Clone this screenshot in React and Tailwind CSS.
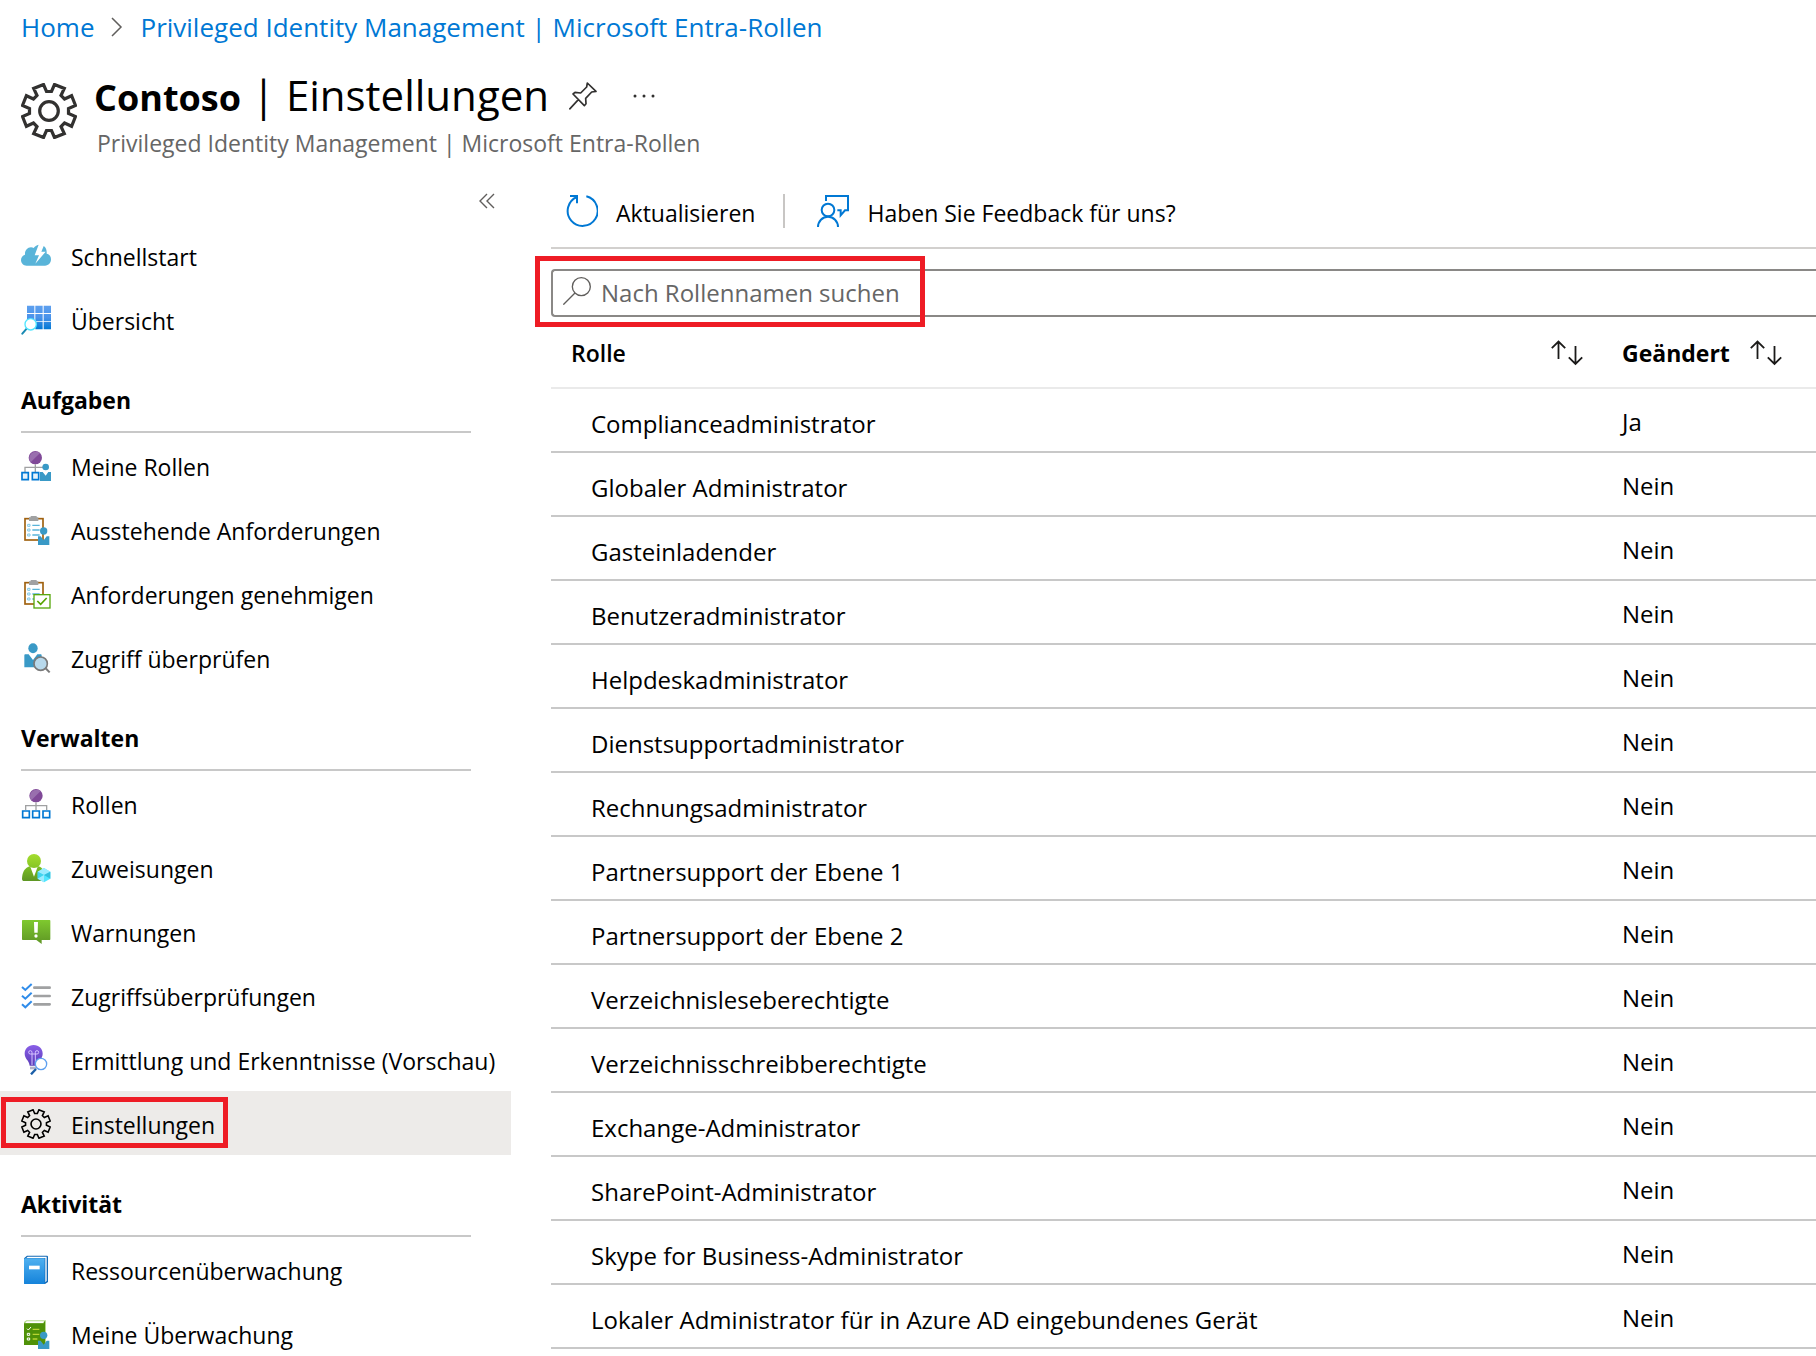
import React, {Component} from 'react'

// menu icons share a 90 x 90 drawing area
const Icon = ({ children }) => (
    <svg viewBox="0 0 90 90" className="h-[30px] w-[30px] shrink-0" fill="none" aria-hidden="true">{children}</svg>
)

const Person = ({ x, y }) => (
    <g transform={`translate(${x} ${y})`} fill="#3999c6">
        <circle cx="17" cy="11" r="11" />
        <path d="M0 27h8l9 12 9-12h8v26H0z" />
    </g>
)

const Clipboard = () => (
    <g>
        <rect x="12" y="11" width="54" height="64" fill="#fff" stroke="#a0610f" strokeWidth="5" />
        <path d="M29 3h18v4h5v11H24V7h5z" fill="#a0a1a2" />
        <path d="M34 31h22M34 45h22M34 60h22" stroke="#59b4d9" strokeWidth="4" />
        <path d="M20 28h7v6h-7zM20 42h7v6h-7zM20 57h7v6h-7z" stroke="#7fc8e6" strokeWidth="3" />
    </g>
)

const Gear = ({ className, strokeWidth }) => (
    <svg viewBox="-28 -28 56 56" className={className} fill="none" stroke="currentColor" strokeWidth={strokeWidth} aria-hidden="true">
        <path d="M-2.5-19.5 2.5-19.5 5.5-26.5 15.3-22.6 12-15.5 15.5-12 22.6-15.3 26.5-5.5 19.5-2.5 19.5 2.5 26.5 5.5 22.6 15.3 15.5 12 12 15.5 15.3 22.6 5.5 26.5 2.5 19.5-2.5 19.5-5.5 26.5-15.3 22.6-12 15.5-15.5 12-22.6 15.3-26.5 5.5-19.5 2.5-19.5-2.5-26.5-5.5-22.6-15.3-15.5-12-12-15.5-15.3-22.6-5.5-26.5z" />
        <circle r="9.3" />
    </svg>
)

const icons = {
    cloud: (
        <Icon>
            <path d="M17 74C7 74 0 66 0 57c0-8 5-14 12-16-1-12 7-22 18-22 3 0 6 1 8 2 4-6 10-10 18-10 12 0 21 9 21 22v5c8 2 13 8 13 17 0 11-7 19-18 19z" fill="#59b4d9" />
            <path d="M54 8 41 43h13L43 68l31-36H61l10-24z" fill="#fff" />
        </Icon>
    ),
    grid: (
        <Icon>
            <defs>
                <linearGradient id="gridFill" x1="0" y1="2" x2="0" y2="73" gradientUnits="userSpaceOnUse">
                    <stop stopColor="#5ea0ef" />
                    <stop offset=".5" stopColor="#4a93ea" />
                    <stop offset="1" stopColor="#0078d4" />
                </linearGradient>
            </defs>
            <path d="M18 2h22v22H18zM43 2h22v22H43zM68 2h22v22H68zM18 27h22v22H18zM43 27h22v22H43zM68 27h22v22H68zM43 51h22v22H43zM68 51h22v22H68z" fill="url(#gridFill)" />
            <path d="M17 71 4 86" stroke="#198ab3" strokeWidth="6" strokeLinecap="round" />
            <circle cx="29" cy="58" r="17" fill="#fff" stroke="#50e6ff" strokeWidth="4" />
        </Icon>
    ),
    myRoles: (
        <Icon>
            <circle cx="43" cy="20" r="20" fill="#804998" />
            <path d="M29 34A20 20 0 0 1 57 6z" fill="#996fae" />
            <path d="M43 40v23M12 63V49h61" stroke="#a0a1a2" strokeWidth="4" />
            <path d="M3 65h19v21H3zM34 65h19v21H34z" fill="#e5f2fb" stroke="#0078d4" strokeWidth="5" />
            <circle cx="74" cy="48" r="10" fill="#3999c6" />
            <path d="M57 63h8l9 11 8-11h8v27H57z" fill="#3999c6" />
        </Icon>
    ),
    pending: (
        <Icon>
            <Clipboard />
            <Person x={51} y={37} />
        </Icon>
    ),
    approve: (
        <Icon>
            <Clipboard />
            <rect x="39" y="47" width="48" height="40" fill="#fff" stroke="#59a80e" strokeWidth="4" />
            <path d="M49 66 59 76 77 57" stroke="#57a300" strokeWidth="5" />
        </Icon>
    ),
    review: (
        <Icon>
            <ellipse cx="36" cy="16" rx="14" ry="15" fill="#3999c6" />
            <path d="M10 38c0-3 1-4 4-4h9l13 17 13-17h9c3 0 4 1 4 4v35H10z" fill="#3999c6" />
            <circle cx="59" cy="62" r="20" fill="#b8d9ec" stroke="#7a7a7a" strokeWidth="5" />
            <path d="M73 75 86 88" stroke="#7a7a7a" strokeWidth="6" />
        </Icon>
    ),
    roles: (
        <Icon>
            <circle cx="45" cy="20" r="20" fill="#804998" />
            <path d="M31 34A20 20 0 0 1 59 6z" fill="#996fae" />
            <path d="M45 40v23M14 63V50h63v13" stroke="#a0a1a2" strokeWidth="4" />
            <path d="M5 66h20v20H5zM35 66h20v20H35zM66 66h20v20H66z" fill="#fff" stroke="#0078d4" strokeWidth="5" />
        </Icon>
    ),
    assign: (
        <Icon>
            <defs>
                <linearGradient id="assignHead" x1="0" y1="0" x2="0" y2="1">
                    <stop stopColor="#a4dd2f" />
                    <stop offset="1" stopColor="#86c525" />
                </linearGradient>
                <linearGradient id="assignBody" x1="0" y1="0" x2="0" y2="1">
                    <stop stopColor="#7cbf22" />
                    <stop offset="1" stopColor="#5e9624" />
                </linearGradient>
            </defs>
            <path d="M26 40h26c14 4 20 15 22 44H10c-5 0-7-3-7-7 1-20 8-32 23-37z" fill="url(#assignBody)" />
            <path d="M28 41 39 71 50 41z" fill="#fff" />
            <circle cx="39" cy="24" r="21" fill="url(#assignHead)" />
            <path d="M69 45 88 56v21L69 88 50 77V56z" fill="#50e6ff" />
            <path d="M69 45 88 56 69 66 50 56z" fill="#9cebff" />
            <path d="M69 66 88 56v21z" fill="#32bedd" />
            <path d="M69 66 50 77V56z" fill="#41d3ee" />
            <path d="M69 66 50 77l19 11z" fill="#9cebff" />
        </Icon>
    ),
    alert: (
        <Icon>
            <defs>
                <linearGradient id="alertFill" x1="0" y1="0" x2="0" y2="1">
                    <stop stopColor="#7fc92f" />
                    <stop offset="1" stopColor="#5e9624" />
                </linearGradient>
            </defs>
            <path d="M5 9h81c1 0 2 1 2 2v56c0 1-1 2-2 2H62v12L46 69H5c-1 0-2-1-2-2V11c0-1 1-2 2-2z" fill="url(#alertFill)" />
            <path d="M39 15h12l-1 32H40z" fill="#fff" />
            <circle cx="45" cy="57" r="5" fill="#fff" />
        </Icon>
    ),
    checks: (
        <Icon>
            <path d="M40 20h46M40 45h46M40 70h46" stroke="#a0a1a2" strokeWidth="8" strokeLinecap="round" />
            <path d="M3 18 13 27 32 9M3 44 13 53 32 35M3 70 13 79 32 61" stroke="#2f8cea" strokeWidth="6" />
        </Icon>
    ),
    insight: (
        <Icon>
            <defs>
                <linearGradient id="bulbFill" x1="0" y1="0" x2="0" y2="1">
                    <stop stopColor="#8a5fe8" />
                    <stop offset="1" stopColor="#5a3cb8" />
                </linearGradient>
            </defs>
            <path d="M38 0C22 0 11 11 11 26c0 16 13 19 15 36h24c2-17 15-20 15-36C65 11 54 0 38 0z" fill="url(#bulbFill)" />
            <path d="M27 65h20v8H27z" fill="#b3b3c8" />
            <path d="M33 60V22a5 5 0 1 0-5 5h20a5 5 0 1 0-5-5v38" stroke="#d5c3ff" strokeWidth="3" />
            <path d="M45 72 30 88" stroke="#1b5fa8" strokeWidth="7" />
            <circle cx="60" cy="57" r="17" fill="#fff" stroke="#5ea0ef" strokeWidth="4" />
        </Icon>
    ),
    settings: <Gear className="h-[30px] w-[30px] shrink-0" strokeWidth="3" />,
    resource: (
        <Icon>
            <defs>
                <linearGradient id="bookFill" x1="0" y1="0" x2="0" y2="1">
                    <stop stopColor="#4fb0f0" />
                    <stop offset="1" stopColor="#1583da" />
                </linearGradient>
            </defs>
            <path d="M18 2h60c2 0 3 1 3 3v76l-9 6H12c-2 0-3-1-3-3V10z" fill="#1369b5" />
            <path d="M20 5h57v73l-4 4V9H16z" fill="#fff" />
            <path d="M12 10h59v77H12c-2 0-3-1-3-3V13c0-2 1-3 3-3z" fill="url(#bookFill)" />
            <path d="M24 32h32v11H24z" fill="#fff" />
        </Icon>
    ),
    audit: (
        <Icon>
            <path d="M16 4h59v69H9V9z" fill="#b4d88b" />
            <path d="M17 7h54v5H13z" fill="#fff" />
            <path d="M9 13h59V9l4-3v72H9z" fill="#4f9108" />
            <path d="M35 31h20M35 46h20M35 60h14" stroke="#b8d432" strokeWidth="4" />
            <path d="M18 29l4 4 8-9M19 43h7v6h-7zM19 57h7v6h-7z" stroke="#fff" strokeWidth="3" />
            <Person x={51} y={38} />
        </Icon>
    )
}

const menu = [
    { items: [
        { icon: 'cloud', label: 'Schnellstart' },
        { icon: 'grid', label: 'Übersicht' }
    ]},
    { title: 'Aufgaben', items: [
        { icon: 'myRoles', label: 'Meine Rollen' },
        { icon: 'pending', label: 'Ausstehende Anforderungen' },
        { icon: 'approve', label: 'Anforderungen genehmigen' },
        { icon: 'review', label: 'Zugriff überprüfen' }
    ]},
    { title: 'Verwalten', items: [
        { icon: 'roles', label: 'Rollen' },
        { icon: 'assign', label: 'Zuweisungen' },
        { icon: 'alert', label: 'Warnungen' },
        { icon: 'checks', label: 'Zugriffsüberprüfungen' },
        { icon: 'insight', label: 'Ermittlung und Erkenntnisse (Vorschau)' },
        { icon: 'settings', label: 'Einstellungen', active: true }
    ]},
    { title: 'Aktivität', items: [
        { icon: 'resource', label: 'Ressourcenüberwachung' },
        { icon: 'audit', label: 'Meine Überwachung' }
    ]}
]

const roles = [
    ['Complianceadministrator', 'Ja'],
    ['Globaler Administrator', 'Nein'],
    ['Gasteinladender', 'Nein'],
    ['Benutzeradministrator', 'Nein'],
    ['Helpdeskadministrator', 'Nein'],
    ['Dienstsupportadministrator', 'Nein'],
    ['Rechnungsadministrator', 'Nein'],
    ['Partnersupport der Ebene 1', 'Nein'],
    ['Partnersupport der Ebene 2', 'Nein'],
    ['Verzeichnisleseberechtigte', 'Nein'],
    ['Verzeichnisschreibberechtigte', 'Nein'],
    ['Exchange-Administrator', 'Nein'],
    ['SharePoint-Administrator', 'Nein'],
    ['Skype for Business-Administrator', 'Nein'],
    ['Lokaler Administrator für in Azure AD eingebundenes Gerät', 'Nein']
]

const SortButton = ({ label }) => (
    <button type="button" aria-label={label} className="block">
        <svg viewBox="0 0 32 26" className="h-[26px] w-8" fill="none" stroke="#1b1a19" strokeWidth="1.8" aria-hidden="true">
            <path d="M7.5 19V1.5M.8 8.2 7.5 1.5l6.7 6.7M24.5 6v18M17.8 17.3l6.7 6.7 6.7-6.7" />
        </svg>
    </button>
)

export default class App extends Component {
    state = {
        search: ''
    }

    handleChange = (evt) => {
        this.setState({[evt.target.name]: evt.target.value})
    }

    render() {
        const term = this.state.search.toLowerCase()
        const shown = roles.filter(([name]) => name.toLowerCase().includes(term))
        return (
            <div className="flex h-screen flex-col overflow-hidden bg-white font-['Open_Sans',sans-serif] text-[24px] leading-8 text-black">
                <nav aria-label="Breadcrumb" className="flex h-14 shrink-0 items-center gap-[17px] pb-0.5 pl-[21px] text-[26px] text-[#0078d4]">
                    <a href="#home">Home</a>
                    <svg viewBox="0 0 12 20" className="h-5 w-3" fill="none" stroke="#605e5c" strokeWidth="1.5" aria-hidden="true"><path d="M1 1l9 9-9 9" /></svg>
                    <a href="#pim">Privileged Identity Management | Microsoft Entra-Rollen</a>
                </nav>
                <header className="flex h-32 shrink-0 gap-[17px] pl-[21px] pt-2">
                    <Gear className="mt-[19px] h-14 w-14 shrink-0 text-[#323130]" strokeWidth="3.2" />
                    <div>
                        <div className="flex h-16 items-center">
                            <h1 className="whitespace-nowrap text-[42px] leading-[64px]"><span className="text-[36px] font-bold">Contoso</span> | Einstellungen</h1>
                            <button type="button" aria-label="Anheften" className="ml-5">
                                <svg viewBox="0 0 84 84" className="h-7 w-7" fill="none" stroke="#323130" strokeWidth="5" strokeLinejoin="round" aria-hidden="true">
                                    <path d="M1 82 28 53M55 3 81 28 68 30 50 49 51 65 46 71 12 36 18 31 35 33 53 15z" />
                                </svg>
                            </button>
                            <button type="button" aria-label="Weitere Optionen" className="ml-9">
                                <svg viewBox="0 0 24 4" className="h-1 w-6" fill="#323130" aria-hidden="true"><circle cx="2" cy="2" r="1.5" /><circle cx="11" cy="2" r="1.5" /><circle cx="20" cy="2" r="1.5" /></svg>
                            </button>
                        </div>
                        <p className="pl-[3px] text-[23px] leading-[30px] text-[#666]">Privileged Identity Management | Microsoft Entra-Rollen</p>
                    </div>
                </header>
                <div className="flex min-h-0 flex-1">
                    <aside className="w-[511px] shrink-0 text-[23px]">
                        <div className="flex h-[39px] items-start justify-end pr-4 pt-[9px]">
                            <button type="button" aria-label="Menü einklappen">
                                <svg viewBox="0 0 16 16" className="h-4 w-4" fill="none" stroke="#605e5c" strokeWidth="1.4" aria-hidden="true"><path d="M8 1 1 8l7 7M15 1 8 8l7 7" /></svg>
                            </button>
                        </div>
                        {menu.map((group, i) => (
                            <section key={i}>
                                {group.title && (
                                    <h2 className="ml-[21px] mr-10 flex h-[82px] items-center border-b-2 border-[#c8c8c8] pt-[18px] font-bold">{group.title}</h2>
                                )}
                                <ul>
                                    {group.items.map((item) => (
                                        <li key={item.label} className={item.active ? 'relative bg-[#edebe9]' : ''}>
                                            <a href="#menu" className="flex h-16 items-center gap-5 whitespace-nowrap pl-[21px] pt-0.5">
                                                {icons[item.icon]}
                                                <span className="pt-0.5">{item.label}</span>
                                            </a>
                                            {item.active && <div className="pointer-events-none absolute left-px top-1.5 h-[51px] w-[227px] border-[5px] border-[#ee1c25]"></div>}
                                        </li>
                                    ))}
                                </ul>
                            </section>
                        ))}
                    </aside>
                    <main className="ml-10 min-w-0 flex-1">
                        <div className="flex h-[65px] items-center border-b-2 border-[#d2d0ce] pb-2.5 pl-[15px] text-[23px]">
                            <button type="button" className="flex items-center gap-[18px]">
                                <svg viewBox="0 0 96 96" className="h-8 w-8" fill="none" stroke="#0078d4" strokeWidth="6" aria-hidden="true">
                                    <path d="M61 4A45 45 0 1 1 33 6M12 3h21v22" />
                                </svg>
                                <span className="pt-1">Aktualisieren</span>
                            </button>
                            <div className="ml-7 mr-8 h-[34px] w-0.5 bg-[#c8c6c4]"></div>
                            <button type="button" className="flex items-center gap-[18px]">
                                <svg viewBox="0 0 96 96" className="h-8 w-8" fill="none" stroke="#0078d4" strokeWidth="6" aria-hidden="true">
                                    <circle cx="33" cy="45" r="19" />
                                    <path d="M3 96a30 31 0 0 1 60 0M27 18V3h66v43H84L71 61V46H61" />
                                </svg>
                                <span className="pt-1">Haben Sie Feedback für uns?</span>
                            </button>
                        </div>
                        <div className="relative mt-5">
                            <label className="flex h-12 items-center rounded-l border-2 border-r-0 border-[#8a8886] pl-2.5">
                                <svg viewBox="0 0 84 84" className="mb-1 h-7 w-7" fill="none" stroke="#605e5c" strokeWidth="4" aria-hidden="true">
                                    <circle cx="55" cy="29" r="27" />
                                    <path d="M36 48 1 83" />
                                </svg>
                                <input type="text" name="search" aria-label="Nach Rollennamen suchen" placeholder="Nach Rollennamen suchen" value={this.state.search} onChange={this.handleChange} className="ml-2.5 h-full min-w-0 flex-1 pb-0.5 outline-none placeholder:text-[#666]" />
                            </label>
                            <div className="pointer-events-none absolute -left-4 -top-[13px] h-[71px] w-[390px] border-[5px] border-[#ee1c25]"></div>
                        </div>
                        <table className="w-full border-separate border-spacing-0 text-left">
                            <thead className="text-[23px]">
                                <tr>
                                    <th className="h-[72px] border-b-2 border-[#eaeaea] pl-5 pr-[39px] pt-0.5 font-semibold">
                                        <div className="flex items-center justify-between">Rolle<SortButton label="Nach Rolle sortieren" /></div>
                                    </th>
                                    <th className="h-[72px] w-[194px] border-b-2 border-[#eaeaea] pt-0.5 font-bold">
                                        <div className="flex items-center gap-5">Geändert<SortButton label="Nach Änderung sortieren" /></div>
                                    </th>
                                </tr>
                            </thead>
                            <tbody>
                                {shown.map(([name, changed]) => (
                                    <tr key={name}>
                                        <td className="h-16 border-b-2 border-[#c8c8c8] pl-10 pt-2">{name}</td>
                                        <td className="h-16 border-b-2 border-[#c8c8c8] pt-1">{changed}</td>
                                    </tr>
                                ))}
                            </tbody>
                        </table>
                    </main>
                </div>
            </div>
        )
    }
}
